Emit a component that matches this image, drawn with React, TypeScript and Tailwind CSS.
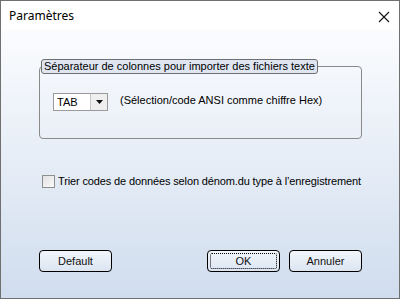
import React from "react";

const tahoma = { fontFamily: '"Liberation Sans", Arial, sans-serif' };

function DialogButton({ label, focused }: { label: string; focused?: boolean }) {
  return (
    <button
      className="w-[73px] h-[22px] rounded-[4px] border border-black bg-gradient-to-b from-[#f2f6fb] to-[#dbe5f2] text-[11px] text-[#111] p-[2px]"
      style={tahoma}
    >
      <div
        className={`w-full h-full flex items-center justify-center rounded-[2px] ${
          focused ? "border border-dotted border-black" : ""
        }`}
      >
        {label}
      </div>
    </button>
  );
}

export default function App() {
  return (
    <div className="w-[400px] h-[299px] border border-[#707070] flex flex-col bg-white overflow-hidden">
      {/* Title bar */}
      <div className="h-[29px] flex items-center justify-between pl-[8px] pr-[9px] bg-white">
        <span className="text-[12px] text-black" style={{ fontFamily: '"Noto Sans", "Open Sans", sans-serif' }}>
          Paramètres
        </span>
        <svg width="12" height="12" viewBox="0 0 12 12" className="mt-[2px]">
          <path d="M1 1 L11 11 M11 1 L1 11" stroke="#111" strokeWidth="1.1" />
        </svg>
      </div>

      {/* Body */}
      <div
        className="flex-1 flex flex-col pl-[38px] pr-[37px] bg-gradient-to-b from-[#fbfcfe] to-[#d0ddee] text-[11px] text-black"
        style={tahoma}
      >
        <fieldset className="mt-[29px] h-[80px] border border-[#8a8a8a] rounded-[4px] px-0 min-w-0">
          <legend className="ml-[1px] px-[2px] h-[15px] leading-[13px] border border-[#6f6f6f] rounded-[3px] bg-[#dfe6f1] text-[11px]">
            Séparateur de colonnes pour importer des fichiers texte
          </legend>
          <div className="flex items-center mt-[19px] px-[13px]">
            <div className="w-[55px] h-[18px] flex border border-[#9a9a9a] bg-white">
              <span className="flex-1 pl-[3px] leading-[16px] text-[11px]">TAB</span>
              <div className="w-[17px] h-[16px] bg-[#efefef] border-l border-[#c8c8c8] flex items-center justify-center">
                <svg width="7" height="4" viewBox="0 0 7 4">
                  <path d="M0 0 H7 L3.5 4 Z" fill="#111" />
                </svg>
              </div>
            </div>
            <span className="ml-[12px] -mt-[4px]">(Sélection/code ANSI comme chiffre Hex)</span>
          </div>
        </fieldset>

        <div className="flex items-center mt-[36px] ml-[3px] h-[13px]">
          <div className="w-[13px] h-[13px] shrink-0 border border-[#8f8f8f] bg-gradient-to-br from-[#e2e2e2] to-[#fafafa]" />
          <span className="ml-[3px] whitespace-nowrap leading-[13px] tracking-[-0.13px]">
            Trier codes de données selon dénom.du type à l’enregistrement
          </span>
        </div>

        <div className="flex mt-[62px]">
          <DialogButton label="Default" />
          <div className="flex-1" />
          <DialogButton label="OK" focused />
          <div className="w-[9px]" />
          <DialogButton label="Annuler" />
        </div>
      </div>
    </div>
  );
}
